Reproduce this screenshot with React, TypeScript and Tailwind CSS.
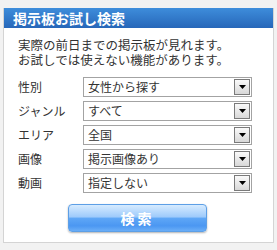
import React from 'react';

const rows = [
  { label: '性別', value: '女性から探す' },
  { label: 'ジャンル', value: 'すべて' },
  { label: 'エリア', value: '全国' },
  { label: '画像', value: '掲示画像あり' },
  { label: '動画', value: '指定しない' },
];

function FakeSelect({ value }: { value: string }) {
  return (
    <div className="flex h-[20px] w-[169px] items-center border border-[#a3a3a3] bg-white">
      <span className="flex-1 pl-[4px] text-[12px] leading-none text-[#333]">{value}</span>
      <span className="mr-[1px] flex h-[16px] w-[16px] items-center justify-center border border-[#7a7a7a] bg-gradient-to-b from-[#fafafa] to-[#d8d8d8]">
        <svg width="7" height="4" viewBox="0 0 7 4">
          <path d="M0 0H7L3.5 4Z" fill="#000" />
        </svg>
      </span>
    </div>
  );
}

export default function App() {
  return (
    <div
      className="h-[250px] w-[277px] bg-[#f2f2f2] px-[3px] pt-[8px]"
      style={{ fontFamily: '"Noto Sans CJK JP", sans-serif' }}
    >
      <div className="border-x border-b border-[#d4d4d4] bg-white">
        <div className="flex h-[20px] items-center bg-gradient-to-b from-[#3e8ddb] to-[#2767b9] pl-[9px] text-[14px] font-bold text-white">
          掲示板お試し検索
        </div>

        <div className="px-[14px] pt-[9px] pb-[10px]">
          <p className="text-[12.5px] leading-[15px] text-[#333]">
            実際の前日までの掲示板が見れます。
            <br />
            お試しでは使えない機能があります。
          </p>

          <div className="mt-[10px] flex flex-col gap-[4px]">
            {rows.map((r) => (
              <div key={r.label} className="flex items-center">
                <span className="w-[65px] text-[12px] text-[#333]">{r.label}</span>
                <FakeSelect value={r.value} />
              </div>
            ))}
          </div>

          <div className="mt-[11px] flex justify-center pr-[2px]">
            <button className="h-[28px] w-[139px] rounded-[4px] border border-[#5d9fe6] bg-[linear-gradient(to_bottom,#d6ebff_0%,#9fcbfb_45%,#5ea6f6_52%,#4b97f2_80%,#6aaef7_100%)] text-[14px] font-bold tracking-[3px] text-white shadow-[0_1px_2px_rgba(0,0,0,0.3)]">
              検索
            </button>
          </div>
        </div>
      </div>
    </div>
  );
}
